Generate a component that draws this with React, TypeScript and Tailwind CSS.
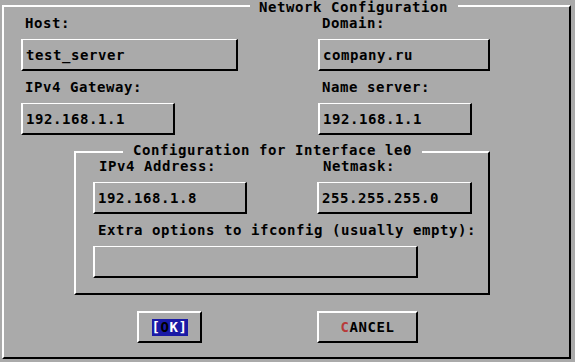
import React from 'react';

interface FieldProps {
  label: string;
  value?: string;
  width: string;
  labelPad?: string;
}

function Field({ label, value, width, labelPad = 'pl-[4px]' }: FieldProps) {
  return (
    <div className="flex flex-col">
      <div className={`h-4 leading-4 ${labelPad}`}>{label}</div>
      <div
        className={`mt-2 flex h-[32px] items-center border-t border-b-2 border-l-2 border-r-2 border-t-white border-l-white border-r-black border-b-black pl-[3px] ${width}`}
      >
        {value && <span className="leading-4">{value}</span>}
      </div>
    </div>
  );
}

export default function App() {
  return (
    <div className="h-[362px] w-[575px] overflow-hidden bg-[#aaaaaa] pt-[5px] pl-[2px] font-['DejaVu_Sans_Mono',monospace] text-[14px] font-bold tracking-[0.57px] text-black">
      {/* Outer dialog frame */}
      <div className="relative h-[354px] w-[569px] border-2 border-t-white border-l-white border-r-black border-b-black">
        <span className="absolute left-[246px] top-[-8px] bg-[#aaaaaa] pl-[9px] pr-[10px] leading-4">
          Network Configuration
        </span>

        <div className="grid grid-cols-[297px_auto] gap-y-2 pl-[17px] pt-[8px]">
          <Field label="Host:" value="test_server" width="w-[217px]" />
          <Field label="Domain:" value="company.ru" width="w-[172px]" />
          <Field label="IPv4 Gateway:" value="192.168.1.1" width="w-[154px]" />
          <Field label="Name server:" value="192.168.1.1" width="w-[154px]" />
        </div>

        {/* Interface frame */}
        <div className="relative mt-4 ml-[70px] h-[144px] w-[416px] border-2 border-t-white border-l-white border-r-black border-b-black">
          <span className="absolute left-[47px] top-[-11px] bg-[#aaaaaa] px-[10px] leading-4">
            Configuration for Interface le0
          </span>
          <div className="grid grid-cols-[224px_auto] gap-y-2 pl-[17px] pt-[5px]">
            <Field label="IPv4 Address:" value="192.168.1.8" width="w-[154px]" labelPad="pl-[6px]" />
            <Field label="Netmask:" value="255.255.255.0" width="w-[155px]" labelPad="pl-[6px]" />
            <div className="col-span-2">
              <Field label="Extra options to ifconfig (usually empty):" width="w-[325px]" labelPad="pl-[5px]" />
            </div>
          </div>
        </div>

        {/* Buttons */}
        <div className="mt-4 flex pl-[133px]">
          <div className="flex h-[32px] w-[65px] items-center justify-center border-2 border-t-white border-l-white border-r-black border-b-black">
            <span className="h-[17px] bg-[#1a1aa6] leading-[17px] text-white">
              [<span className="text-black">O</span>K]
            </span>
          </div>
          <div className="ml-[115px] flex h-[32px] w-[101px] items-center justify-center border-2 border-t-white border-l-white border-r-black border-b-black">
            <span className="leading-4">
              <span className="text-[#b83a3a]">C</span>ANCEL
            </span>
          </div>
        </div>
      </div>
    </div>
  );
}
